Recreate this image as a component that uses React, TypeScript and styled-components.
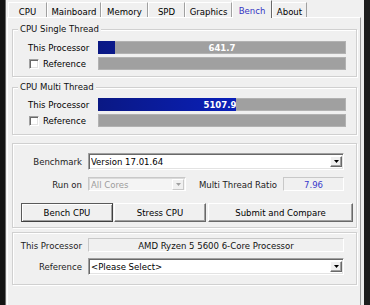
import React from "react";
import styled, { createGlobalStyle } from "styled-components";

const FONT = `"DejaVu Sans Condensed", "Lato", sans-serif`;

const Global = createGlobalStyle`
  html, body { margin: 0; padding: 0; }
  body {
    width: 370px;
    height: 305px;
    overflow: hidden;
    background: #1a1a1a;
    font-family: ${FONT};
    font-size: 9.5px;
    color: #000;
  }
  * { box-sizing: border-box; }
`;

const Screen = styled.div`
  display: flex;
  width: 370px;
  height: 305px;
  padding: 0 6px 0 5px;
  background: linear-gradient(to right, #131313, #1f1f1f);
`;

const Window = styled.div`
  flex: 1;
  display: flex;
  flex-direction: column;
  background: #f0f0f0;
  border-left: 1px solid #6a6a6a;
  padding: 0 3px 0 1px;
`;

const TabBar = styled.div`
  height: 17px;
  display: flex;
  align-items: flex-start;
  padding-left: 1px;
`;

const Tab = styled.div<{ $w: number; $active?: boolean }>`
  width: ${(p) => p.$w}px;
  height: ${(p) => (p.$active ? 18 : 15)}px;
  margin-top: ${(p) => (p.$active ? 0 : 2)}px;
  display: flex;
  justify-content: center;
  align-items: center;
  padding-top: ${(p) => (p.$active ? 1 : 2)}px;
  border-top: 1px solid #fff;
  border-left: 1px solid #fff;
  border-right: 1px solid ${(p) => (p.$active ? "#696969" : "#a0a0a0")};
  background: #f0f0f0;
  color: ${(p) => (p.$active ? "#3434c4" : "#000")};
  white-space: nowrap;
  position: relative;
  z-index: ${(p) => (p.$active ? 1 : 0)};
`;

const Page = styled.div`
  flex: 1;
  display: flex;
  flex-direction: column;
  border-top: 1px solid #fff;
  border-left: 1px solid #fff;
  border-right: 1px solid #a0a0a0;
  padding: 11px 3px 0 4px;
`;

const Group = styled.section<{ $mt?: number; $pad: string }>`
  position: relative;
  margin-top: ${(p) => p.$mt ?? 0}px;
  padding: ${(p) => p.$pad};
  border: 1px solid #d0d0d0;
  box-shadow: 1px 1px 0 #fff, inset 1px 1px 0 #fff;
`;

const GroupTitle = styled.span`
  position: absolute;
  top: -7px;
  left: 5px;
  height: 11px;
  line-height: 11px;
  padding: 0 2px;
  background: #f0f0f0;
  color: #111;
  white-space: nowrap;
`;

const BarGrid = styled.div`
  display: grid;
  grid-template-columns: 70px 1fr;
  grid-auto-rows: 13px;
  row-gap: 3px;
  align-items: center;
`;

const RowLabel = styled.span`
  white-space: nowrap;
  color: #000;
`;

const CheckLabel = styled.label`
  display: flex;
  align-items: center;
  gap: 4px;
  padding-left: 1px;
  white-space: nowrap;
`;

const CheckBox = styled.span`
  width: 10px;
  height: 10px;
  background: #fff;
  border: 1px solid;
  border-color: #a0a0a0 #fff #fff #a0a0a0;
  box-shadow: inset 1px 1px 0 #696969, inset -1px -1px 0 #e3e3e3;
`;

const Bar = styled.div`
  height: 13px;
  display: grid;
  grid-template-columns: 1fr;
  background: #a0a0a0;
  box-shadow: inset 0 0 0 1px #b2b2b2;
`;

const Fill = styled.div`
  grid-area: 1 / 1;
  display: flex;
  justify-content: flex-end;
  align-items: center;
  background: linear-gradient(to right, #0a1884, #0a26e4);
  background-size: 247px 100%;
  background-repeat: no-repeat;
  color: #fff;
  font-weight: bold;
  overflow: hidden;
  white-space: nowrap;
`;

const CenterValue = styled.span`
  grid-area: 1 / 1;
  align-self: center;
  justify-self: center;
  color: #fff;
  font-weight: bold;
`;

const FieldRow = styled.div<{ $mt?: number }>`
  display: flex;
  align-items: center;
  margin-top: ${(p) => p.$mt ?? 0}px;
`;

const FieldLabel = styled.span`
  width: 63px;
  margin-right: 6px;
  text-align: right;
  white-space: nowrap;
  color: #1c1c1c;
`;

const Combo = styled.div<{ $disabled?: boolean; $w?: number; $h: number }>`
  ${(p) => (p.$w ? `width: ${p.$w}px;` : "flex: 1;")}
  height: ${(p) => p.$h}px;
  display: flex;
  align-items: center;
  padding-left: 2px;
  background: ${(p) => (p.$disabled ? "#f4f4f4" : "#fff")};
  color: ${(p) => (p.$disabled ? "#9c9c9c" : "#000")};
  border: 1px solid;
  border-color: ${(p) =>
    p.$disabled ? "#c8c8c8 #fff #fff #c8c8c8" : "#a0a0a0 #fff #fff #a0a0a0"};
  box-shadow: ${(p) =>
    p.$disabled
      ? "inset 1px 1px 0 #dadada"
      : "inset 1px 1px 0 #696969, inset -1px -1px 0 #e3e3e3"};
  white-space: nowrap;
`;

const ComboText = styled.span`
  flex: 1;
  overflow: hidden;
`;

const DropButton = styled.span<{ $disabled?: boolean }>`
  width: 12px;
  height: 11px;
  margin-right: 1px;
  display: flex;
  align-items: center;
  justify-content: center;
  background: #f0f0f0;
  border: 1px solid;
  border-color: ${(p) =>
    p.$disabled ? "#fff #c8c8c8 #c8c8c8 #fff" : "#fff #696969 #696969 #fff"};
  box-shadow: ${(p) => (p.$disabled ? "none" : "inset -1px -1px 0 #a0a0a0")};
`;

const ReadBox = styled.div<{ $w?: number; $color?: string }>`
  ${(p) => (p.$w ? `width: ${p.$w}px;` : "flex: 1;")}
  height: 14px;
  display: flex;
  align-items: center;
  justify-content: center;
  background: #f0f0f0;
  border: 1px solid;
  border-color: #c8c8c8 #fff #fff #c8c8c8;
  color: ${(p) => p.$color ?? "#111"};
  white-space: nowrap;
`;

const RatioLabel = styled.span`
  margin-left: auto;
  margin-right: 6px;
  white-space: nowrap;
  color: #1c1c1c;
`;

const ButtonRow = styled.div`
  display: flex;
  margin: 12px -9px 0 2px;
`;

const Button = styled.button<{ $w?: number; $ml?: number; $default?: boolean }>`
  ${(p) => (p.$w ? `width: ${p.$w}px;` : "flex: 1;")}
  margin-left: ${(p) => p.$ml ?? 0}px;
  height: 19px;
  padding: 0;
  font-family: ${FONT};
  font-size: 9.5px;
  color: #000;
  background: #f0f0f0;
  border: 1px solid;
  border-color: ${(p) =>
    p.$default ? "#5a5a5a #404040 #404040 #5a5a5a" : "#fff #696969 #696969 #fff"};
  box-shadow: ${(p) =>
    p.$default
      ? "inset 1px 1px 0 #fff, inset -1px -1px 0 #a0a0a0"
      : "inset -1px -1px 0 #a0a0a0"};
`;

const Arrow = ({ gray }: { gray?: boolean }) => (
  <svg width="5" height="3" viewBox="0 0 5 3">
    <polygon points="0,0 5,0 2.5,3" fill={gray ? "#a0a0a0" : "#000"} />
  </svg>
);

const SCALE = 9150;

const ScoreBar = ({ value, inside }: { value: number; inside?: boolean }) => {
  const pct = (value / SCALE) * 100;
  const text = value.toFixed(1);
  return (
    <Bar>
      {value > 0 && <Fill style={{ width: `${pct}%` }}>{inside ? text : null}</Fill>}
      {value > 0 && !inside && <CenterValue>{text}</CenterValue>}
    </Bar>
  );
};

const tabs: { name: string; w: number }[] = [
  { name: "CPU", w: 39 },
  { name: "Mainboard", w: 54 },
  { name: "Memory", w: 47 },
  { name: "SPD", w: 37 },
  { name: "Graphics", w: 47 },
  { name: "Bench", w: 40 },
  { name: "About", w: 35 },
];

const BenchGroup = ({
  title,
  value,
  inside,
  mt,
  pad,
}: {
  title: string;
  value: number;
  inside?: boolean;
  mt?: number;
  pad: string;
}) => (
  <Group $mt={mt} $pad={pad}>
    <GroupTitle>{title}</GroupTitle>
    <BarGrid>
      <RowLabel>This Processor</RowLabel>
      <ScoreBar value={value} inside={inside} />
      <CheckLabel>
        <CheckBox />
        Reference
      </CheckLabel>
      <ScoreBar value={0} />
    </BarGrid>
  </Group>
);

export default function App() {
  return (
    <>
      <Global />
      <Screen>
        <Window>
          <TabBar>
            {tabs.map((t) => (
              <Tab key={t.name} $w={t.w} $active={t.name === "Bench"}>
                {t.name}
              </Tab>
            ))}
          </TabBar>
          <Page>
            <BenchGroup title="CPU Single Thread" value={641.7} pad="11px 10px 6px 15px" />
            <BenchGroup
              title="CPU Multi Thread"
              value={5107.9}
              inside
              mt={10}
              pad="10px 10px 7px 15px"
            />
            <Group $mt={8} $pad="9px 12px 5px 6px">
              <FieldRow>
                <FieldLabel>Benchmark</FieldLabel>
                <Combo $h={17}>
                  <ComboText>Version 17.01.64</ComboText>
                  <DropButton>
                    <Arrow />
                  </DropButton>
                </Combo>
              </FieldRow>
              <FieldRow $mt={7}>
                <FieldLabel>Run on</FieldLabel>
                <Combo $h={14} $w={98} $disabled>
                  <ComboText>All Cores</ComboText>
                  <DropButton $disabled>
                    <Arrow gray />
                  </DropButton>
                </Combo>
                <RatioLabel>Multi Thread Ratio</RatioLabel>
                <ReadBox $w={61} $color="#3a3acc">
                  7.96
                </ReadBox>
              </FieldRow>
              <ButtonRow>
                <Button $w={92} $default>
                  Bench CPU
                </Button>
                <Button $w={92} $ml={1}>
                  Stress CPU
                </Button>
                <Button $ml={2}>Submit and Compare</Button>
              </ButtonRow>
            </Group>
            <Group $mt={4} $pad="5px 12px 9px 6px">
              <FieldRow>
                <FieldLabel>This Processor</FieldLabel>
                <ReadBox>AMD Ryzen 5 5600 6-Core Processor</ReadBox>
              </FieldRow>
              <FieldRow $mt={6}>
                <FieldLabel>Reference</FieldLabel>
                <Combo $h={17}>
                  <ComboText>&lt;Please Select&gt;</ComboText>
                  <DropButton>
                    <Arrow />
                  </DropButton>
                </Combo>
              </FieldRow>
            </Group>
          </Page>
        </Window>
      </Screen>
    </>
  );
}
